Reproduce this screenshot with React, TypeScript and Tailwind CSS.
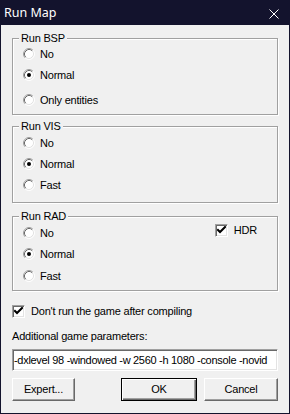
import type { ReactNode } from 'react';

const font = { fontFamily: '"Liberation Sans", Arial, sans-serif' };

function Radio({ checked }: { checked?: boolean }) {
  return (
    <svg width="12" height="12" viewBox="0 0 12 12" className="shrink-0">
      <circle cx="6" cy="6" r="5" fill="#ffffff" />
      <path d="M2.11 9.89 A5.5 5.5 0 0 1 9.89 2.11" fill="none" stroke="#a0a0a0" strokeWidth="1" />
      <path d="M9.89 2.11 A5.5 5.5 0 0 1 2.11 9.89" fill="none" stroke="#ffffff" strokeWidth="1" />
      <path d="M2.82 9.18 A4.5 4.5 0 0 1 9.18 2.82" fill="none" stroke="#696969" strokeWidth="1" />
      <path d="M9.18 2.82 A4.5 4.5 0 0 1 2.82 9.18" fill="none" stroke="#e3e3e3" strokeWidth="1" />
      {checked && <circle cx="6" cy="6" r="2" fill="#000000" />}
    </svg>
  );
}

function Check() {
  return (
    <div className="w-[13px] h-[13px] shrink-0 bg-white border border-t-[#a0a0a0] border-l-[#a0a0a0] border-b-white border-r-white shadow-[inset_1px_1px_0_#696969,inset_-1px_-1px_0_#e3e3e3] flex items-center justify-center">
      <svg width="9" height="9" viewBox="0 0 9 9">
        <path d="M1 4 L3 6 L8 1" fill="none" stroke="#000" strokeWidth="2" strokeLinecap="square" />
      </svg>
    </div>
  );
}

function Option({ label, checked, className = '' }: { label: string; checked?: boolean; className?: string }) {
  return (
    <div className={`h-[16px] flex items-center gap-[5px] pl-[10px] ${className}`}>
      <Radio checked={checked} />
      <span>{label}</span>
    </div>
  );
}

function Group({ title, className = '', children }: { title: string; className?: string; children: ReactNode }) {
  return (
    <div className={`relative border border-[#a0a0a0] shadow-[inset_1px_1px_0_#ffffff,1px_1px_0_#ffffff] ${className}`}>
      <span className="absolute left-[6px] top-[-7px] px-[2px] bg-[#f0f0f0] leading-[13px]">{title}</span>
      {children}
    </div>
  );
}

function Button({ label, primary, className = '' }: { label: string; primary?: boolean; className?: string }) {
  return (
    <div
      className={`h-[23px] flex items-center justify-center bg-[#f0f0f0] ${
        primary
          ? 'border border-black shadow-[inset_1px_1px_0_#ffffff,inset_-1px_-1px_0_#696969,inset_-2px_-2px_0_#a0a0a0]'
          : 'border border-t-white border-l-white border-b-[#696969] border-r-[#696969] shadow-[inset_-1px_-1px_0_#a0a0a0]'
      } ${className}`}
    >
      {label}
    </div>
  );
}

export default function App() {
  return (
    <div className="w-[290px] h-[414px] bg-[#f0f0f0] border border-[#13132d] flex flex-col text-[11px] tracking-[-0.2px] text-black overflow-hidden" style={font}>
      {/* Title bar */}
      <div className="h-[24px] bg-[#13132d] flex items-center justify-between pl-[3px] pr-[10px] shrink-0">
        <span className="text-white text-[12.5px] tracking-normal mt-[1px]" style={{ fontFamily: '"Noto Sans", sans-serif' }}>Run Map</span>
        <svg width="10" height="10" viewBox="0 0 10 10" className="mt-[1px]">
          <path d="M0.5 0.5 L9.5 9.5 M9.5 0.5 L0.5 9.5" stroke="#ffffff" strokeWidth="1" />
        </svg>
      </div>

      <div className="px-[11px] pt-[13px] flex flex-col">
        <Group title="Run BSP" className="pt-[7px] pb-[6px]">
          <Option label="No" />
          <Option label="Normal" checked className="mt-[5px]" />
          <Option label="Only entities" className="mt-[9px]" />
        </Group>

        <Group title="Run VIS" className="mt-[11px] pt-[8px] pb-[9px]">
          <Option label="No" />
          <Option label="Normal" checked className="mt-[5px]" />
          <Option label="Fast" className="mt-[5px]" />
        </Group>

        <Group title="Run RAD" className="mt-[13px] pt-[8px] pb-[6px]">
          <div className="flex">
            <div className="flex flex-col">
              <Option label="No" />
              <Option label="Normal" checked className="mt-[5px]" />
              <Option label="Fast" className="mt-[6px]" />
            </div>
            <div className="ml-auto mr-[20px] mt-[-1px] h-[13px] flex items-center gap-[6px]">
              <Check />
              <span>HDR</span>
            </div>
          </div>
        </Group>

        <div className="mt-[14px] h-[13px] flex items-center gap-[6px]">
          <Check />
          <span>Don&apos;t run the game after compiling</span>
        </div>

        <div className="mt-[12px] leading-[13px]">Additional game parameters:</div>

        <div className="mt-[6px] h-[22px] bg-white border border-t-[#a0a0a0] border-l-[#a0a0a0] border-b-white border-r-white shadow-[inset_1px_1px_0_#696969,inset_-1px_-1px_0_#e3e3e3] flex items-center pl-[1px] overflow-hidden whitespace-nowrap tracking-[-0.3px]">
          -dxlevel 98 -windowed -w 2560 -h 1080 -console -novid
        </div>

        <div className="mt-[7px] flex">
          <Button label="Expert..." className="w-[63px]" />
          <Button label="OK" primary className="w-[76px] ml-[46px]" />
          <Button label="Cancel" className="w-[74px] ml-[7px]" />
        </div>
      </div>
    </div>
  );
}
